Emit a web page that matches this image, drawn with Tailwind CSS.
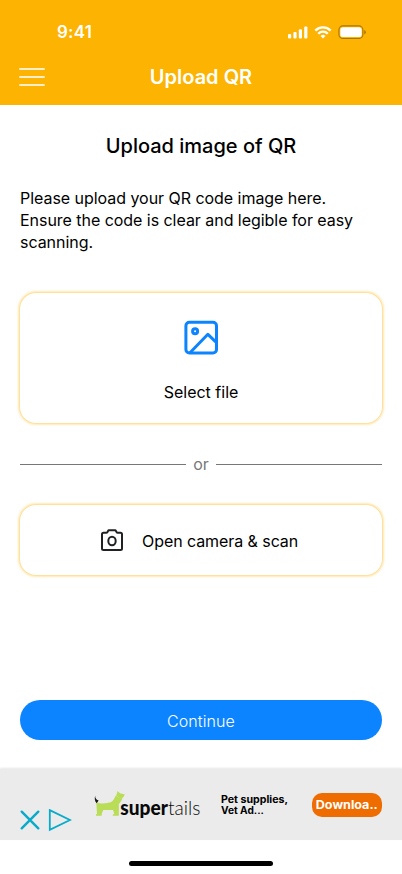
<!DOCTYPE html>
<html lang="en">
<head>
<meta charset="utf-8">
<meta name="viewport" content="width=device-width, initial-scale=1">
<title>Upload QR</title>
<script src="https://cdn.jsdelivr.net/npm/@tailwindcss/browser@4"></script>
</head>
<body class="bg-white">
<div class="flex h-[874px] w-[402px] flex-col overflow-hidden bg-white font-['Inter',sans-serif] text-base text-black">
  <header class="flex h-[105px] shrink-0 flex-col bg-[#fdb302] pt-[21px] text-white">
    <div class="flex h-[22px] items-center justify-between pr-[36px] pl-[57px]">
      <span class="text-[17px] leading-[22px] font-semibold tracking-[0.2px]">9:41</span>
      <div class="flex items-center">
        <svg class="h-[13px] w-[20px]" viewBox="0 0 20 13" fill="#fff"><rect x="0" y="8" width="3.2" height="4.5" rx="1"/><rect x="5.4" y="6" width="3.2" height="6.5" rx="1"/><rect x="10.8" y="3.2" width="3.2" height="9.3" rx="1"/><rect x="16.2" y=".6" width="3.2" height="11.9" rx="1"/></svg>
        <svg class="ml-[6px] h-[13px] w-[18px]" viewBox="0 0 18 13" fill="none" stroke="#fff" stroke-width="2.3"><path d="M1.3 4.6a11 11 0 0 1 15.4 0M4.2 7.7a6.8 6.8 0 0 1 9.6 0"/><path d="M9 12.4 6.5 9.9a3.6 3.6 0 0 1 5 0z" fill="#fff" stroke="none"/></svg>
        <svg class="ml-[6px] h-[14px] w-[28px]" viewBox="0 0 28 14"><rect x=".9" y=".9" width="24" height="12.6" rx="4" fill="none" stroke="#000" stroke-opacity=".33" stroke-width="1.1"/><rect x="2.3" y="2.3" width="21.4" height="9.8" rx="2.7" fill="#fff"/><path d="M26.3 5v4.4a2.4 2.4 0 0 0 0-4.4" fill="#000" fill-opacity=".38"/></svg>
      </div>
    </div>
    <div class="mt-[3px] grid h-[62px] grid-cols-[132px_1fr_132px] items-center pt-[2px]">
      <svg class="ml-[19px] h-[20px] w-[26px]" viewBox="0 0 26 20" fill="none" stroke="#fff" stroke-opacity=".78" stroke-width="1.9" stroke-linecap="round"><path d="M1 2h24M1 10h24M1 18h24"/></svg>
      <h1 class="text-center text-xl font-semibold">Upload QR</h1>
    </div>
  </header>

  <main class="flex flex-col px-5">
    <h2 class="mt-[27px] text-center text-xl leading-7 font-medium">Upload image of QR</h2>
    <p class="mt-[27px] leading-[22px] tracking-[-0.04px]">Please upload your QR code image here.<br>Ensure the code is clear and legible for easy<br>scanning.</p>
    <button class="mt-10 flex h-[130px] flex-col items-center rounded-2xl bg-white pt-[25px] shadow-[0_0_3px_1px_#fdb30299]">
      <svg class="-mt-px h-10 w-10" viewBox="0 0 40 40" fill="none" stroke="#0c84ff" stroke-width="3" stroke-linejoin="round" stroke-linecap="round"><rect x="4.9" y="5.2" width="30.6" height="30.8" rx="3.5"/><circle cx="14.1" cy="14.2" r="2.5"/><path d="m9.2 35.5 17.7-18.2 8.4 8.1"/></svg>
      <span class="mt-[23px] leading-6">Select file</span>
    </button>
    <div class="mt-[29px] flex h-6 items-center text-[#777]">
      <div class="h-px flex-1 bg-[#777]"></div>
      <span class="w-[30px] text-center">or</span>
      <div class="h-px flex-1 bg-[#777]"></div>
    </div>
    <button class="mt-[29px] flex h-[70px] items-center rounded-2xl bg-white pl-[80px] shadow-[0_0_3px_1px_#fdb30299]">
      <svg class="h-6 w-6" viewBox="0 0 24 24" fill="none" stroke="#202124" stroke-width="2" stroke-linejoin="round"><path d="M2 6.3a1.5 1.5 0 0 1 1.5-1.5h2.7a1.5 1.5 0 0 0 1.3-.8l1-1.7h7l1 1.7a1.5 1.5 0 0 0 1.3.8h2.7A1.5 1.5 0 0 1 22 6.3v14.1a1.5 1.5 0 0 1-1.5 1.5h-17A1.5 1.5 0 0 1 2 20.4z"/><ellipse cx="12" cy="13" rx="3.7" ry="4.3"/></svg>
      <span class="ml-[18px] pt-[2px] tracking-[-0.07px]">Open camera &amp; scan</span>
    </button>
    <button class="mt-[125px] h-10 rounded-full bg-[#0c84ff] pt-[2px] text-center font-light tracking-[0.1px] text-white">Continue</button>
  </main>

  <aside class="mt-[29px] flex h-[71px] shrink-0 bg-[#ebebeb] shadow-[0_-1px_2px_#0000001a]">
    <svg class="mt-[40px] ml-5 h-[23px] w-[52px] shrink-0" viewBox="0 0 52 23" fill="none" stroke="#08abc9"><path d="m1.7 2.7 16.6 16.6m0-16.6L1.7 19.3" stroke-width="2.4" stroke-linecap="round"/><path d="M29.8 1.1v19.8L50 11z" stroke-width="1.8"/></svg>
    <svg class="mt-[20px] ml-[22px] h-[36px] w-[110px] shrink-0" viewBox="0 0 110 36"><path d="M2.3 13.2c4 1.7 9.5 1.5 14.4.1 2.3-.8 3.7-3.6 5-6.7l6.5 3.9-3.4 4.8v11.5h-6v-1.3l1.5-.8-1.3-3.7H9.3l-1.6 3.7v2.1H2v-1.3l1-.8z" fill="#b9dd57"/><path d="m22.2 6.8 1.4-4.9 2.4 2.3 4.9 1.4-1.7 2.6-1.9 2.1z" fill="#b9dd57"/><path d="M1.2 6.5c-.2 2.5.8 4.1 3.4 5l-1.9 2.8C.9 12.4.2 9.4 1.2 6.5" fill="#181818"/><text x="26.3" y="25.6" font-family="Lato, sans-serif" font-size="20" fill="#090909" textLength="80" lengthAdjust="spacingAndGlyphs"><tspan font-weight="900">super</tspan><tspan font-weight="300">tails</tspan></text></svg>
    <svg class="mt-[24px] ml-[16px] h-[25px] w-[70px] shrink-0" viewBox="0 0 70 25" font-family="Inter, sans-serif" font-size="9.7" font-weight="700"><text x="1" y="10" textLength="67" lengthAdjust="spacingAndGlyphs">Pet supplies,</text><text x="1" y="21" textLength="43" lengthAdjust="spacingAndGlyphs">Vet Ad...</text></svg>
    <div class="mt-[24px] ml-[22px] h-6 w-[70px] shrink-0 rounded-[10px] bg-[#ef6c00]">
      <svg class="h-6 w-[70px]" viewBox="0 0 70 24"><text x="3.8" y="16" textLength="62" lengthAdjust="spacingAndGlyphs" font-family="Inter, sans-serif" font-size="11.5" font-weight="700" fill="#fff">Downloa..</text></svg>
    </div>
  </aside>
  <div class="mx-auto mt-[21px] h-[5px] w-36 shrink-0 rounded-full bg-black"></div>
</div>
</body>
</html>
